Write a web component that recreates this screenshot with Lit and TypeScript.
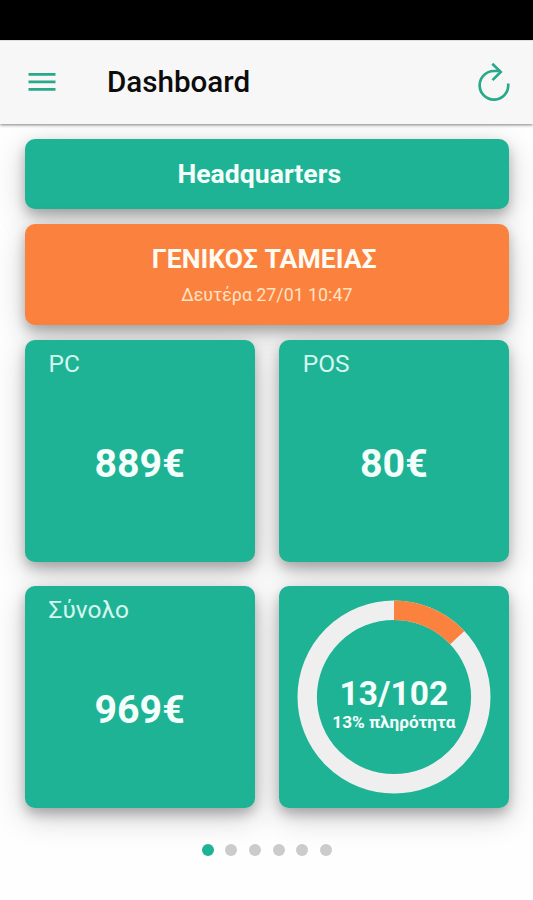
import { LitElement, html, css, svg } from "lit";
import { customElement, property } from "lit/decorators.js";

@customElement("app-header")
class AppHeader extends LitElement {
  static styles = css`
    :host {
      display: block;
      position: relative;
      z-index: 1;
    }
    .status {
      height: 40px;
      background: #000;
    }
    .bar {
      box-sizing: border-box;
      height: 84px;
      display: flex;
      align-items: center;
      padding: 0 21px 2px 28px;
      background: #f7f7f7;
      border-top: 1px solid #dedede;
      box-shadow: 0 1px 3px rgba(0, 0, 0, 0.5);
    }
    .menu {
      width: 28px;
      height: 24px;
      display: block;
    }
    .title {
      flex: 1;
      margin: 0 0 0 51px;
      font-size: 29.6px;
      line-height: 40px;
      font-weight: 500;
      color: #0c0c0c;
    }
    .refresh {
      width: 36px;
      height: 42px;
      display: block;
    }
  `;
  render() {
    return html`
      <div class="status"></div>
      <div class="bar">
        <svg class="menu" viewBox="0 0 28 24">
          <path d="M.5 4.4h27M.5 11.9h27M.5 19.4h27" stroke="#28a98a" stroke-width="2.7" />
        </svg>
        <h1 class="title">Dashboard</h1>
        <svg class="refresh" viewBox="0 0 36 42" fill="none" stroke="#28a98a" stroke-width="2.7">
          <path d="M32.2 22.5v.8A14.3 14.3 0 1 1 17.9 10H24.5" />
          <path d="M16.3 2.7l8.4 8.2-8.2 8.2" />
        </svg>
      </div>
    `;
  }
}

@customElement("amount-card")
class AmountCard extends LitElement {
  @property() label = "";
  @property() amount = "";
  static styles = css`
    :host {
      display: flex;
      flex-direction: column;
      box-sizing: border-box;
      padding: 9px 24px 0;
    }
    .label {
      font-size: 24.5px;
      line-height: 30px;
      color: #d5f7ee;
    }
    .amount {
      margin-top: 61px;
      font-size: 39.3px;
      line-height: 48px;
      font-weight: 700;
      text-align: center;
      color: #f4fffc;
    }
  `;
  render() {
    return html`
      <div class="label">${this.label}</div>
      <div class="amount">${this.amount}</div>
    `;
  }
}

@customElement("occupancy-card")
class OccupancyCard extends LitElement {
  @property({ type: Number }) used = 0;
  @property({ type: Number }) total = 1;
  static styles = css`
    :host {
      display: grid;
      place-items: center;
    }
    .ring,
    .text {
      grid-area: 1 / 1;
    }
    .ring {
      width: 194px;
      height: 194px;
    }
    .text {
      padding-top: 14px;
      text-align: center;
      font-weight: 700;
      color: #f4fffc;
    }
    .count {
      font-size: 33.5px;
      line-height: 36px;
    }
    .note {
      font-size: 17.2px;
      line-height: 20px;
    }
  `;
  render() {
    const share = Math.round((this.used / this.total) * 100);
    return html`
      <svg class="ring" viewBox="0 0 194 194" fill="none" stroke-width="19.4">
        <circle cx="97" cy="97" r="86.8" stroke="#efefef" />
        ${svg`<circle cx="97" cy="97" r="86.8" stroke="#fb823e" pathLength="100"
          stroke-dasharray="${share} ${100 - share}" transform="rotate(-90 97 97)" />`}
      </svg>
      <div class="text">
        <div class="count">${this.used}/${this.total}</div>
        <div class="note">${share}% πληρότητα</div>
      </div>
    `;
  }
}

@customElement("app-root")
class AppRoot extends LitElement {
  static styles = css`
    :host {
      display: block;
      height: 900px;
      overflow: hidden;
      background: #fefefe;
      font-family: Roboto, "Noto Sans", sans-serif;
    }
    .content {
      display: flex;
      flex-direction: column;
      padding: 14.5px 24px 0 24.5px;
    }
    .card {
      border-radius: 10px;
      background: #1fb395;
      box-shadow: 0 6px 12px rgba(0, 0, 0, 0.23), 0 9px 30px rgba(0, 0, 0, 0.21);
    }
    .place {
      box-sizing: border-box;
      height: 70.5px;
      padding-right: 15px;
      line-height: 69px;
      font-size: 26.6px;
      font-weight: 700;
      text-align: center;
      color: #f4fffc;
    }
    .cashier {
      box-sizing: border-box;
      height: 101px;
      margin-top: 15px;
      padding-top: 18px;
      text-align: center;
      background: #fb823e;
    }
    .name {
      padding-right: 5px;
      font-size: 26.6px;
      line-height: 34px;
      font-weight: 700;
      color: #fffaf2;
    }
    .time {
      margin-top: 8px;
      font-size: 17.8px;
      line-height: 22px;
      color: #ffe3c4;
    }
    .grid {
      display: grid;
      grid-template-columns: 1fr 1fr;
      grid-auto-rows: 222px;
      gap: 24px;
      margin-top: 15px;
    }
    .dots {
      display: flex;
      justify-content: center;
      gap: 11.7px;
      margin-top: 35.5px;
    }
    .dot {
      width: 12px;
      height: 12px;
      border-radius: 50%;
      background: #cbcbcb;
    }
    .active {
      background: #1fb395;
    }
  `;
  render() {
    return html`
      <app-header></app-header>
      <main class="content">
        <div class="card place">Headquarters</div>
        <div class="card cashier">
          <div class="name">ΓΕΝΙΚΟΣ ΤΑΜΕΙΑΣ</div>
          <div class="time">Δευτέρα 27/01 10:47</div>
        </div>
        <div class="grid">
          <amount-card class="card" label="PC" amount="889€"></amount-card>
          <amount-card class="card" label="POS" amount="80€"></amount-card>
          <amount-card class="card" label="Σύνολο" amount="969€"></amount-card>
          <occupancy-card class="card" used="13" total="102"></occupancy-card>
        </div>
        <div class="dots">
          ${[0, 1, 2, 3, 4, 5].map((i) => html`<span class="dot ${i === 0 ? "active" : ""}"></span>`)}
        </div>
      </main>
    `;
  }
}
